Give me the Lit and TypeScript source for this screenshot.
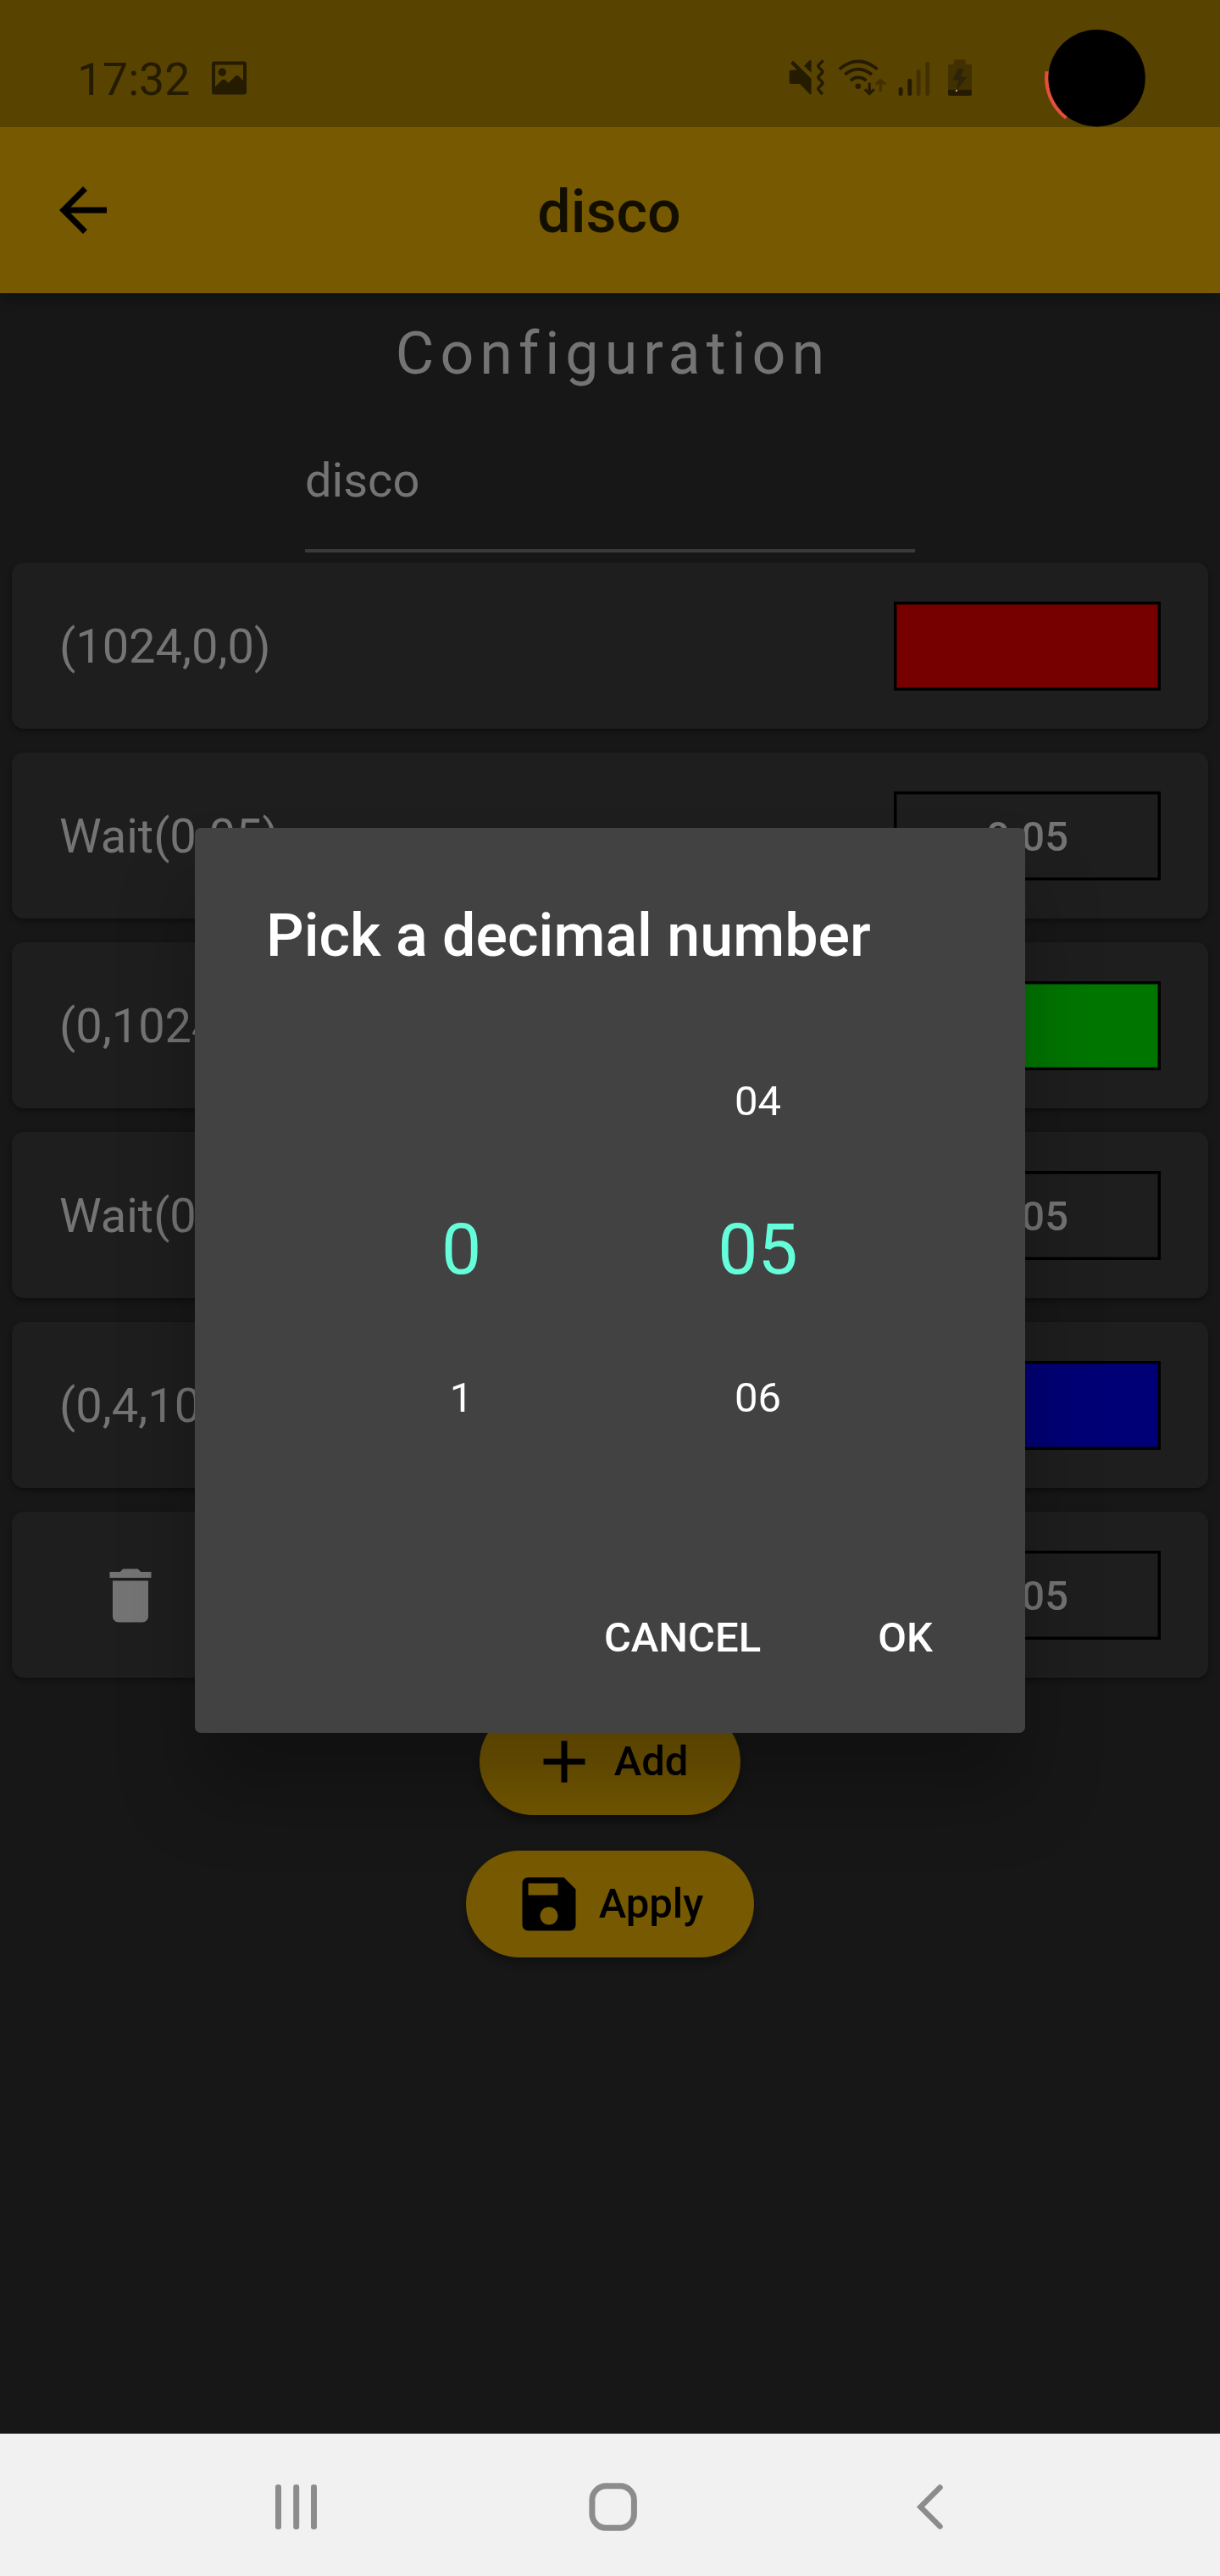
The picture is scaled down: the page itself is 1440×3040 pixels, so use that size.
import { LitElement, html, css, svg, nothing } from "lit";
import { customElement, property } from "lit/decorators.js";

type Step =
  | { kind: "color"; label: string; color: string }
  | { kind: "wait"; label: string; value: string }
  | { kind: "removing"; value: string };

const STEPS: Step[] = [
  { kind: "color", label: "(1024,0,0)", color: "#760000" },
  { kind: "wait", label: "Wait(0.05)", value: "0.05" },
  { kind: "color", label: "(0,1024,0)", color: "#007600" },
  { kind: "wait", label: "Wait(0.05)", value: "0.05" },
  { kind: "color", label: "(0,4,1024)", color: "#000076" },
  { kind: "removing", value: "0.05" },
];

const PATHS = {
  back: "M20 11H7.83l5.59-5.59L12 4l-8 8 8 8 1.41-1.41L7.83 13H20v-2z",
  trash:
    "M6 19c0 1.1.9 2 2 2h8c1.1 0 2-.9 2-2V7H6v12zM19 4h-3.5l-1-1h-5l-1 1H5v2h14V4z",
  add: "M19 13h-6v6h-2v-6H5v-2h6V5h2v6h6v2z",
  save: "M17 3H5c-1.11 0-2 .9-2 2v14c0 1.1.89 2 2 2h14c1.1 0 2-.9 2-2V7l-4-4zm-5 16c-1.66 0-3-1.34-3-3s1.34-3 3-3 3 1.34 3 3-1.34 3-3 3zm3-10H5V5h10v4z",
};

const icon = (d: string) =>
  html`<svg class="icon" viewBox="0 0 24 24" width="84" height="84">${svg`<path d=${d} fill="currentColor"/>`}</svg>`;

@customElement("status-bar")
class StatusBar extends LitElement {
  static styles = css`
    :host {
      display: flex;
      justify-content: space-between;
      height: 150px;
      background: #594300;
      color: #241b00;
      position: relative;
    }
    svg {
      display: block;
      flex: none;
    }
    .left {
      display: flex;
      padding-left: 91px;
    }
    .time {
      font-size: 53.5px;
      line-height: 60px;
      padding-top: 64px;
      width: 159px;
    }
    .photo {
      margin-top: 72px;
    }
    .right {
      display: flex;
      padding-top: 68px;
      padding-right: 292px;
    }
    .wifi {
      margin-left: 13px;
    }
    .signal {
      margin-left: 14px;
    }
    .battery {
      margin-left: 20px;
    }
    .camera {
      position: absolute;
      left: 1230px;
      top: 30px;
    }
  `;

  render() {
    return html`
      <div class="left">
        <div class="time">17:32</div>
        <svg class="photo" width="41" height="40" viewBox="0 0 41 40">
          <path
            fill="currentColor"
            fill-rule="evenodd"
            d="M3 .5h35a3 3 0 0 1 3 3v33a3 3 0 0 1-3 3H3a3 3 0 0 1-3-3v-33a3 3 0 0 1 3-3zM4 4.5v26L12 22.600q2-1.800 4 0L19.500 26l8.500-8.300q1.800-1.600 3.600 0L37 23V4.500zM12.300 8.500a4.700 4.700 0 1 1 0 9.400 4.700 4.700 0 0 1 0-9.400z"
          />
        </svg>
      </div>
      <div class="right">
        <svg width="45" height="48" viewBox="88 204 130.700 144" preserveAspectRatio="none">
          <g fill="currentColor">
            <path d="M93 254q0-6 6-6h21L97 224l9-9 62 63v56q-3 1-6-2l-33-35H99q-6 0-6-6zM143 233l20-20q5-2 5 2v42z" />
          </g>
          <path
            d="M209 214l-15 16q-4 4 0 8l11 12q4 4 0 8l-11 12q-4 4 0 8l11 12q4 4 0 8l-11 12q-4 4 0 8l12 16"
            fill="none"
            stroke="currentColor"
            stroke-width="10"
          />
        </svg>
        <svg class="wifi" width="58" height="48" viewBox="256 204 168.400 144" preserveAspectRatio="none">
          <g fill="none" stroke="currentColor" stroke-width="11">
            <path d="M264 245q64-56 130 0" />
            <path d="M283 264q45-38 92 0" />
            <path d="M302 285q26-22 54 0" />
            <path d="M367 293v38M351 316l16 16 16-16" stroke-width="9" />
            <path d="M405 324v-38M389 299l16-15 16 15" stroke="#413100" stroke-width="9" />
          </g>
          <circle cx="328" cy="305" r="9.500" fill="currentColor" />
        </svg>
        <svg class="signal" width="38" height="48" viewBox="465 204 110.300 144" preserveAspectRatio="none">
          <rect x="467" y="309" width="14" height="30" rx="7" fill="currentColor" />
          <rect x="498" y="278" width="14" height="61" rx="7" fill="currentColor" />
          <rect x="528" y="246" width="14" height="93" rx="7" fill="#413100" />
          <rect x="559" y="218" width="14" height="121" rx="7" fill="#413100" />
        </svg>
        <svg class="battery" width="30" height="48" viewBox="633 204 87.100 144" preserveAspectRatio="none">
          <path d="M636 318v-84q0-6 6-6h14v-11q0-6 6-6h28q6 0 6 6v11h15q6 0 6 6v84z" fill="#413100" />
          <path d="M636 318h81v15q0 6-6 6h-69q-6 0-6-6z" fill="currentColor" />
          <path d="M670 243h20l-10 29h21l-37 50 8-37h-20z" fill="#2e240a" />
          <rect x="662" y="318" width="6" height="6" fill="#b5ac94" />
        </svg>
      </div>
      <svg class="camera" width="124" height="124" viewBox="0 0 124 124">
        <path d="M5.800 54.300A59.500 59.500 0 0 0 28.500 109" fill="none" stroke="#e64f3c" stroke-width="4.500" />
        <circle cx="64.600" cy="62.200" r="57.200" fill="#000" />
      </svg>
    `;
  }
}

@customElement("step-card")
class StepCard extends LitElement {
  static styles = css`
    :host {
      display: flex;
      box-sizing: border-box;
      height: 196px;
      padding: 1px 56px 0;
      align-items: center;
      background: #1e1e1e;
      border-radius: 14px;
      box-shadow: 0 3px 6px rgba(0, 0, 0, 0.4);
      color: #747474;
      justify-content: space-between;
    }
    .label {
      padding-top: 1px;
      font-size: 56px;
      line-height: 66px;
    }
    .trash {
      display: flex;
      margin-left: 42px;
    }
    .box {
      box-sizing: border-box;
      width: 315px;
      height: 105px;
      border: 3px solid #000;
      box-shadow: inset 0 0 0 1px rgba(0, 0, 0, 0.45);
      font-size: 49px;
      font-weight: 500;
      line-height: 101px;
      text-align: center;
    }
  `;

  @property({ attribute: false }) step!: Step;

  render() {
    const s = this.step;
    return html`
      ${s.kind === "removing"
        ? html`<div class="trash">${icon(PATHS.trash)}</div>`
        : html`<div class="label">${s.label}</div>`}
      <div class="box" style=${s.kind === "color" ? `background:${s.color}` : ""}>
        ${s.kind === "color" ? nothing : s.value}
      </div>
    `;
  }
}

@customElement("decimal-dialog")
class DecimalDialog extends LitElement {
  static styles = css`
    :host {
      display: flex;
      flex-direction: column;
      box-sizing: border-box;
      width: 980px;
      height: 1068px;
      padding: 86px 84px 0;
      background: #424242;
      border-radius: 7px;
      box-shadow: 0 70px 90px rgba(0, 0, 0, 0.26);
      color: #fff;
    }
    .title {
      font-size: 70px;
      font-weight: 500;
      line-height: 82px;
      white-space: nowrap;
    }
    .wheels {
      display: flex;
      justify-content: center;
      margin-top: 67px;
      padding-right: 1px;
    }
    .wheel {
      display: grid;
      grid-template-rows: repeat(3, 175px);
      width: 350px;
      text-align: center;
      font-size: 49px;
      line-height: 175px;
    }
    .selected {
      font-size: 84px;
      color: #64ffda;
    }
    .actions {
      display: flex;
      justify-content: flex-end;
      gap: 138px;
      margin-top: 167px;
      padding-right: 25px;
      font-size: 49px;
      font-weight: 500;
      line-height: 58px;
    }
  `;

  private wheel(values: string[]) {
    return html`<div class="wheel">
      ${values.map((v, i) => html`<div class=${i === 1 ? "selected" : "value"}>${v}</div>`)}
    </div>`;
  }

  render() {
    return html`
      <div class="title">Pick a decimal number</div>
      <div class="wheels">${this.wheel(["", "0", "1"])}${this.wheel(["04", "05", "06"])}</div>
      <div class="actions"><span>CANCEL</span><span>OK</span></div>
    `;
  }
}

@customElement("app-root")
class AppRoot extends LitElement {
  static styles = css`
    :host {
      display: flex;
      flex-direction: column;
      position: relative;
      width: 1440px;
      height: 3040px;
      overflow: hidden;
      background: #171717;
      font-family: Roboto, "Liberation Sans", sans-serif;
    }
    .appbar {
      display: grid;
      grid-template-columns: 196px 1fr 196px;
      align-items: center;
      flex: none;
      height: 196px;
      background: #765900;
      box-shadow: 0 7px 14px rgba(0, 0, 0, 0.3);
      color: #000;
    }
    .back {
      display: flex;
      padding-left: 56px;
    }
    .appbar-title {
      padding: 3px 2px 0 0;
      color: #120e00;
      text-align: center;
      font-size: 70px;
      font-weight: 500;
      line-height: 82px;
    }
    .body {
      flex: 1;
      display: flex;
      flex-direction: column;
      align-items: center;
      color: #747474;
    }
    .heading {
      margin-top: 30px;
      padding-left: 7px;
      font-size: 70px;
      line-height: 82px;
      letter-spacing: 7px;
    }
    .field {
      box-sizing: border-box;
      width: 720px;
      height: 194px;
      padding-top: 76px;
      border-bottom: 4px solid #3a3a3a;
      font-size: 56px;
      line-height: 66px;
    }
    .steps {
      display: flex;
      flex-direction: column;
      gap: 28px;
      align-self: stretch;
      padding: 12px 14px 35.5px;
    }
    .pill {
      display: flex;
      align-items: center;
      justify-content: center;
      gap: 17px;
      box-sizing: border-box;
      height: 126px;
      padding-right: 4px;
      border-radius: 63px;
      background: #765900;
      box-shadow: 0 7px 10px rgba(0, 0, 0, 0.3);
      color: #000;
      font-size: 49px;
      font-weight: 500;
      line-height: 60px;
    }
    .pill span {
      padding-top: 1px;
    }
    .add {
      width: 308px;
    }
    .apply {
      width: 340px;
      margin-top: 42px;
    }
    .nav {
      display: flex;
      flex: none;
      align-items: center;
      height: 168px;
      padding: 6px 0 0 320px;
      box-sizing: border-box;
      background: #f1f1f1;
    }
    .home {
      margin-left: 310px;
    }
    .prev {
      margin-left: 320px;
    }
    .overlay {
      position: absolute;
      left: 230px;
      top: 977px;
    }
  `;

  render() {
    return html`
      <status-bar></status-bar>
      <div class="appbar">
        <div class="back">${icon(PATHS.back)}</div>
        <div class="appbar-title">disco</div>
      </div>
      <div class="body">
        <div class="heading">Configuration</div>
        <div class="field">disco</div>
        <div class="steps">${STEPS.map((s) => html`<step-card .step=${s}></step-card>`)}</div>
        <div class="pill add">${icon(PATHS.add)}<span>Add</span></div>
        <div class="pill apply">${icon(PATHS.save)}<span>Apply</span></div>
      </div>
      <div class="nav">
        <svg width="60" height="60" viewBox="0 0 60 60">
          <g fill="#8c8c8c">
            <rect x="5" y="3" width="7" height="53" rx="3" />
            <rect x="26.200" y="3" width="7" height="53" rx="3" />
            <rect x="47" y="3" width="7" height="53" rx="3" />
          </g>
        </svg>
        <svg class="home" width="66" height="60" viewBox="0 0 66 60">
          <rect x="8.900" y="4.800" width="49.500" height="49.500" rx="16.500" fill="none" stroke="#8c8c8c" stroke-width="7" />
        </svg>
        <svg class="prev" width="48" height="60" viewBox="0 0 48 60">
          <path d="M33.500 6.500L10.500 29.500l23 23" fill="none" stroke="#8c8c8c" stroke-width="6.500" stroke-linecap="round" />
        </svg>
      </div>
      <decimal-dialog class="overlay"></decimal-dialog>
    `;
  }
}
